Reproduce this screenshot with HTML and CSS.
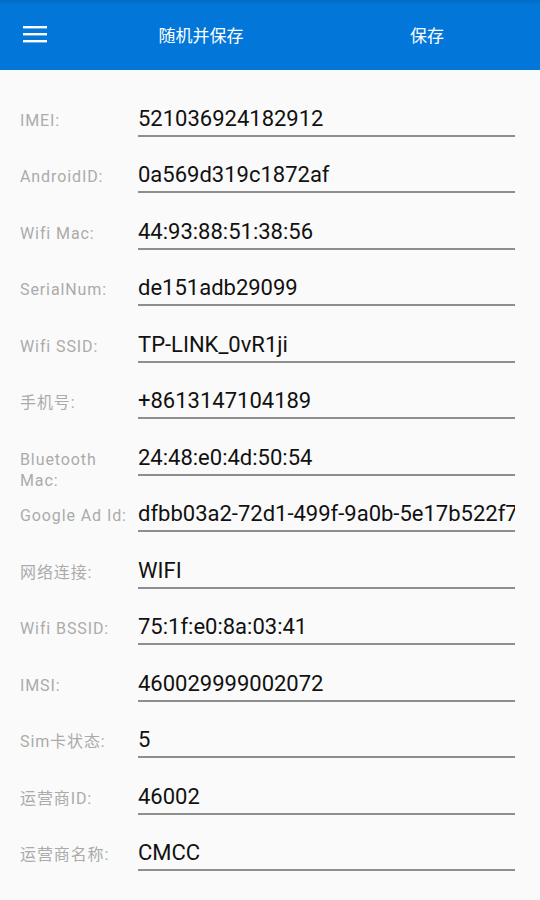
FILE: index.html
```html
<!DOCTYPE html>
<html lang="zh-CN">
<head>
<meta charset="utf-8">
<title>设备信息</title>
<link rel="stylesheet" href="styles.css">
</head>
<body>
<header class="appbar">
  <div class="menu">
    <svg class="menu-icon" width="24" height="18" viewBox="0 0 24 18" aria-hidden="true">
      <rect x="0" y="0" width="24" height="2.4" fill="#fff"/>
      <rect x="0" y="7" width="24" height="2.4" fill="#fff"/>
      <rect x="0" y="14" width="24" height="2.4" fill="#fff"/>
    </svg>
  </div>
  <div class="action">随机并保存</div>
  <div class="action">保存</div>
</header>
<main class="form">
  <div class="row"><div class="label">IMEI:</div><div class="value">521036924182912</div></div>
  <div class="row"><div class="label">AndroidID:</div><div class="value">0a569d319c1872af</div></div>
  <div class="row"><div class="label">Wifi Mac:</div><div class="value">44:93:88:51:38:56</div></div>
  <div class="row"><div class="label">SerialNum:</div><div class="value">de151adb29099</div></div>
  <div class="row"><div class="label">Wifi SSID:</div><div class="value">TP-LINK_0vR1ji</div></div>
  <div class="row"><div class="label">手机号:</div><div class="value">+8613147104189</div></div>
  <div class="row"><div class="label">Bluetooth Mac:</div><div class="value">24:48:e0:4d:50:54</div></div>
  <div class="row"><div class="label">Google Ad Id:</div><div class="value">dfbb03a2-72d1-499f-9a0b-5e17b522f7e1</div></div>
  <div class="row"><div class="label">网络连接:</div><div class="value">WIFI</div></div>
  <div class="row"><div class="label">Wifi BSSID:</div><div class="value">75:1f:e0:8a:03:41</div></div>
  <div class="row"><div class="label">IMSI:</div><div class="value">460029999002072</div></div>
  <div class="row"><div class="label">Sim卡状态:</div><div class="value">5</div></div>
  <div class="row"><div class="label">运营商ID:</div><div class="value">46002</div></div>
  <div class="row"><div class="label">运营商名称:</div><div class="value">CMCC</div></div>
</main>
</body>
</html>
```

FILE: styles.css
```css
html, body {
  margin: 0;
  padding: 0;
}
body {
  background: #fafafa;
  font-family: Roboto, "Noto Sans CJK SC", sans-serif;
  width: 540px;
  height: 900px;
  overflow: hidden;
}
.appbar {
  height: 70px;
  display: flex;
  align-items: center;
  background: linear-gradient(to bottom, #026bc6 0px, #0277d9 5px, #0277d9 100%);
  color: #fff;
}
.menu {
  width: 88px;
  height: 70px;
  display: flex;
  align-items: center;
  box-sizing: border-box;
  padding-left: 23px;
}
.menu-icon {
  display: block;
}
.action {
  flex: 1;
  text-align: center;
  font-family: "Noto Sans CJK SC", sans-serif;
  font-size: 17px;
  line-height: 24px;
}
.form {
  padding-top: 35.5px;
}
.row {
  height: 56.54px;
  display: flex;
  align-items: baseline;
  padding-left: 20px;
  padding-right: 25px;
  box-sizing: border-box;
}
.label {
  width: 112px;
  flex: none;
  margin-right: 6px;
  font-size: 16px;
  letter-spacing: 0.9px;
  line-height: 21px;
  color: #ababab;
}
.value {
  flex: 1;
  min-width: 0;
  font-size: 22px;
  line-height: 26px;
  color: #111;
  white-space: nowrap;
  overflow: hidden;
  padding-bottom: 3px;
  border-bottom: 2px solid #8e8e8e;
}
```
